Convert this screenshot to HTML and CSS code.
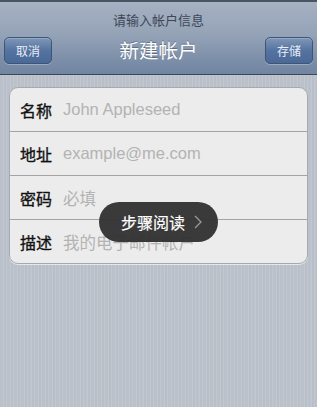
FILE: index.html
```html
<!DOCTYPE html>
<html lang="zh">
<head>
<meta charset="utf-8">
<link rel="stylesheet" href="styles.css">
</head>
<body>
<div class="screen">
  <header class="navbar">
    <div class="prompt">请输入帐户信息</div>
    <div class="bar-row">
      <button class="bar-btn">取消</button>
      <div class="title">新建帐户</div>
      <button class="bar-btn">存储</button>
    </div>
  </header>
  <main class="content">
    <div class="card">
      <div class="row"><span class="label">名称</span><span class="ph">John Appleseed</span></div>
      <div class="row"><span class="label">地址</span><span class="ph">example@me.com</span></div>
      <div class="row"><span class="label">密码</span><span class="ph">必填</span></div>
      <div class="row"><span class="label">描述</span><span class="ph">我的电子邮件帐户</span></div>
    </div>
    <div class="toast">
      <span class="toast-text">步骤阅读</span>
      <svg class="chev" width="8" height="14" viewBox="0 0 8 14"><path d="M1 1 L7 7 L1 13" fill="none" stroke="#9a9a9a" stroke-width="1.3"/></svg>
    </div>
  </main>
</div>
</body>
</html>
```
FILE: styles.css
```css
html, body {
  margin: 0;
  padding: 0;
}
body {
  width: 317px;
  height: 407px;
  overflow: hidden;
  font-family: "Liberation Sans", "Noto Sans CJK SC", sans-serif;
  background: repeating-linear-gradient(90deg, #bac1ca 0 3px, #c2c8d0 3px 4px, #b8bfc8 4px 6px, #c0c7cf 6px 7px);
}
.screen {
  display: flex;
  flex-direction: column;
  height: 407px;
}
.navbar {
  height: 72px;
  border-top: 2px solid #4a5563;
  border-bottom: 1px solid #3d4756;
  background: linear-gradient(#a6b1c2 0%, #95a3b7 45%, #8394ac 70%, #7085a2 100%);
  display: flex;
  flex-direction: column;
  align-items: stretch;
}
.prompt {
  text-align: center;
  font-family: "Noto Sans CJK SC", sans-serif;
  font-size: 13px;
  color: #3c4758;
  padding-top: 9px;
  height: 21px;
  line-height: 17px;
}
.bar-row {
  display: flex;
  align-items: center;
  justify-content: space-between;
  padding: 5px 4px 0 4px;
}
.bar-btn {
  width: 48px;
  height: 27px;
  border-radius: 5px;
  border: 1px solid #3f5577;
  background: linear-gradient(#7f97b8, #5573a0 50%, #4a6996);
  box-shadow: 0 1px 0 rgba(255,255,255,0.25), inset 0 1px 0 rgba(255,255,255,0.2);
  color: #e8eef6;
  font-family: "Noto Sans CJK SC", sans-serif;
  font-size: 12px;
  padding: 0;
}
.title {
  color: #ffffff;
  font-family: "Noto Sans CJK SC", sans-serif;
  font-size: 19.5px;
  text-shadow: 0 -1px 0 rgba(60,70,90,0.5);
  margin-top: -2px;
}
.content {
  position: relative;
  flex: 1;
  padding: 12px 9px 0 9px;
}
.card {
  background: #ececec;
  border: 1px solid #a7a9ac;
  border-radius: 9px;
  box-shadow: 0 1px 0 rgba(255,255,255,0.6);
  overflow: hidden;
}
.row {
  height: 43px;
  display: flex;
  align-items: center;
  padding-left: 10px;
  border-bottom: 1px solid #a3a3a3;
}
.row:last-child {
  border-bottom: none;
}
.label {
  font-family: "Noto Sans CJK SC", sans-serif;
  font-weight: 400;
  font-size: 16px;
  color: #111;
  width: 43px;
  -webkit-text-stroke: 0.35px #111;
}
.ph {
  font-family: "Liberation Sans", "Noto Sans CJK SC", sans-serif;
  font-size: 16.5px;
  color: #b3b3b3;
}
.toast {
  position: absolute;
  left: 99px;
  top: 127px;
  width: 119px;
  height: 40px;
  border-radius: 20px;
  background: rgba(50,50,50,0.96);
  display: flex;
  align-items: center;
  box-sizing: border-box;
  padding-left: 22px;
}
.toast-text {
  font-family: "Noto Sans CJK SC", sans-serif;
  font-size: 16px;
  color: #ffffff;
  -webkit-text-stroke: 0.2px #fff;
}
.chev {
  margin-left: 9px;
}
```
